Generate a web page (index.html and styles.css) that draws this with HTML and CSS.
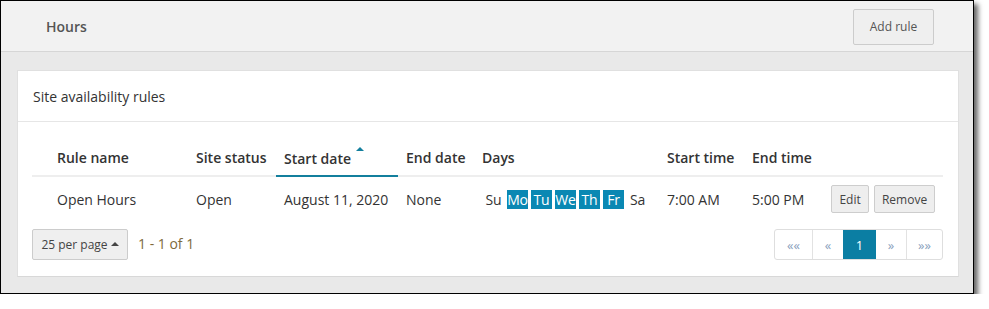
FILE: index.html
```
<!DOCTYPE html>
<html>
<head>
<meta charset="utf-8">
<link rel="stylesheet" href="styles.css">
</head>
<body>
<div class="frame">
  <div class="topbar">
    <div class="page-title">Hours</div>
    <button class="btn btn-add">Add rule</button>
  </div>
  <div class="content">
    <div class="card">
      <div class="card-head">Site availability rules</div>
      <div class="card-body">
        <table class="rules">
          <colgroup>
            <col style="width:156px"><col style="width:88px"><col style="width:122px"><col style="width:76px"><col style="width:185px"><col style="width:85px"><col style="width:79px"><col style="width:120px">
          </colgroup>
          <thead>
            <tr>
              <th class="first">Rule name</th>
              <th>Site status</th>
              <th class="sorted">Start date<span class="caret"></span></th>
              <th>End date</th>
              <th>Days</th>
              <th>Start time</th>
              <th>End time</th>
              <th></th>
            </tr>
          </thead>
          <tbody>
            <tr>
              <td class="first">Open Hours</td>
              <td>Open</td>
              <td>August 11, 2020</td>
              <td>None</td>
              <td>
                <div class="days">
                  <span class="day">Su</span><span class="day on">Mo</span><span class="day on">Tu</span><span class="day on">We</span><span class="day on">Th</span><span class="day on">Fr</span><span class="day">Sa</span>
                </div>
              </td>
              <td>7:00 AM</td>
              <td>5:00 PM</td>
              <td>
                <div class="actions">
                  <button class="btn btn-sm btn-edit">Edit</button>
                  <button class="btn btn-sm btn-remove">Remove</button>
                </div>
              </td>
            </tr>
          </tbody>
        </table>
        <div class="footer">
          <div class="footer-left">
            <button class="btn btn-perpage">25 per page <span class="up"></span></button>
            <span class="count">1 - 1 of 1</span>
          </div>
          <div class="pager">
            <span class="pg w37">&laquo;&laquo;</span>
            <span class="pg w31">&laquo;</span>
            <span class="pg w33 active">1</span>
            <span class="pg w30">&raquo;</span>
            <span class="pg w38">&raquo;&raquo;</span>
          </div>
        </div>
      </div>
    </div>
  </div>
</div>
</body>
</html>
```

FILE: styles.css
```
html, body {
  margin: 0;
  padding: 0;
  background: #ffffff;
}
body {
  font-family: "Open Sans", "Noto Sans", sans-serif;
  color: #333;
}
.frame {
  width: 972px;
  height: 292px;
  border: 1px solid #000;
  background: #e9e9e9;
  box-shadow: 4px 4px 5px rgba(0,0,0,0.6);
  display: flex;
  flex-direction: column;
}
.topbar {
  height: 50px;
  background: #f2f2f2;
  border-bottom: 1px solid #d6d6d6;
  display: flex;
  align-items: center;
  justify-content: space-between;
  padding: 0 39px 0 45px;
}
.page-title {
  font-size: 14px;
  font-weight: 600;
  color: #555;
  margin-top: 1px;
}
.btn {
  font-family: "Open Sans", "Noto Sans", sans-serif;
  background: #efefef;
  border: 1px solid #cccccc;
  border-radius: 2px;
  color: #555;
  padding: 0;
  cursor: pointer;
}
.btn-add {
  width: 81px;
  height: 36px;
  font-size: 12px;
  margin-top: 1px;
}
.content {
  flex: 1;
  padding: 18px 14px 15px 16px;
}
.card {
  background: #fff;
  border: 1px solid #e0e0e0;
  border-bottom-color: #d8d8d8;
}
.card-head {
  border-bottom: 1px solid #e6e6e6;
  display: flex;
  align-items: center;
  padding-left: 15px;
  font-size: 14px;
  color: #333;
  padding-top: 1px;
  box-sizing: border-box;
  height: 51px;
}
.card-body {
  padding: 18px 14px 16px 14px;
}
.rules {
  border-collapse: collapse;
  table-layout: fixed;
  width: 911px;
  font-size: 14px;
}
.rules th {
  height: 36px;
  padding: 0 8px;
  text-align: left;
  font-weight: 600;
  color: #333;
  border-bottom: 2px solid #eeeeee;
  white-space: nowrap;
  vertical-align: middle;
  box-sizing: border-box;
}
.rules th.sorted {
  border-bottom-color: #137f9d;
}
.rules th.first, .rules td.first {
  padding-left: 25px;
}
.caret {
  display: inline-block;
  width: 0;
  height: 0;
  border-left: 4px solid transparent;
  border-right: 4px solid transparent;
  border-bottom: 4px solid #137f9d;
  margin-left: 5px;
  vertical-align: 13px;
}
.rules td {
  height: 44px;
  padding: 0 8px;
  color: #333;
  white-space: nowrap;
  vertical-align: middle;
}
.days {
  display: flex;
  gap: 3px;
  padding-left: 1px;
}
.day {
  display: inline-block;
  min-width: 21px;
  height: 19px;
  line-height: 19px;
  text-align: center;
  letter-spacing: -0.2px;
}
.day.on {
  background: #0a88b3;
  color: #fff;
}
.actions {
  display: flex;
  gap: 5px;
}
.btn-sm {
  height: 28px;
  font-size: 12px;
  color: #444;
  background: #eeeeee;
  border-color: #cdcdcd;
}
.btn-edit { width: 40px; }
.btn-remove { width: 64px; }
.footer {
  margin-top: 8px;
  display: flex;
  justify-content: space-between;
  align-items: center;
}
.footer-left {
  display: flex;
  align-items: center;
  gap: 10px;
}
.btn-perpage {
  width: 96px;
  height: 31px;
  font-size: 12px;
  color: #444;
  display: flex;
  align-items: center;
  justify-content: center;
  gap: 3px;
}
.up {
  display: inline-block;
  width: 0;
  height: 0;
  border-left: 4px solid transparent;
  border-right: 4px solid transparent;
  border-bottom: 4px solid #444;
  margin-top: -1px;
}
.count {
  font-size: 14px;
  color: #7e6a3c;
  margin-top: -3px;
}
.pager {
  display: flex;
  height: 31px;
  border: 1px solid #dedede;
  border-radius: 3px;
  box-sizing: border-box;
  overflow: hidden;
  margin-right: 1px;
}
.pg {
  display: flex;
  align-items: center;
  justify-content: center;
  font-size: 13px;
  color: #8a9fbd;
  border-left: 1px solid #e2e2e2;
  box-sizing: border-box;
}
.pg:first-child { border-left: none; }
.pg.active {
  background: #0b7ea3;
  color: #fff;
  font-size: 13px;
  border-left: none;
}
.pg.active + .pg { border-left: none; }
.w37 { width: 37px; }
.w31 { width: 31px; }
.w33 { width: 33px; }
.w30 { width: 30px; }
.w38 { width: 36px; }
```
